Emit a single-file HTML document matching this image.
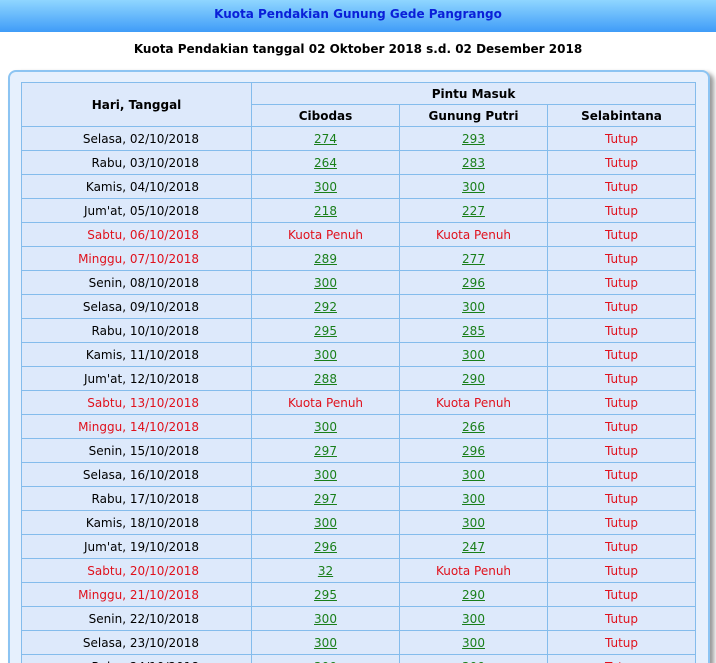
<!DOCTYPE html>
<html style="overflow:hidden;height:663px"><head><meta charset="utf-8"><style>
body{margin:0;background:#fff;font-family:"DejaVu Sans","Liberation Sans",sans-serif;font-size:12px;width:716px;height:663px;overflow:hidden;position:relative}
.top{height:32px;background:linear-gradient(#8fd6ff,#3f9cf8);text-align:center;color:#0a1fd8;font-weight:bold;font-size:12px;line-height:28px}
h2{margin:0;font-size:12px;text-align:center;position:absolute;top:42px;left:0;width:716px;color:#000}
.box{position:absolute;left:8px;top:70px;width:698px;height:620px;border:2px solid #8cc4f2;border-radius:8px;background:#e6f0fd;box-shadow:4px 3px 5px #999}
table{position:absolute;left:11px;top:10px;border-collapse:collapse;background:#dde9fb}
td,th{border:1px solid #84bcec;height:23px;padding:0;text-align:center;color:#000}
th{font-weight:bold;height:21px}
td.d{text-align:right;padding-right:52px}
.r{color:#e0111c}
a{color:#1a7f1a;text-decoration:underline}
</style></head><body>
<div class="top">Kuota Pendakian Gunung Gede Pangrango</div>
<h2>Kuota Pendakian tanggal 02 Oktober 2018 s.d. 02 Desember 2018</h2>
<div class="box"><table>
<colgroup><col style="width:230px"><col style="width:148px"><col style="width:148px"><col style="width:148px"></colgroup>
<tr><th rowspan="2">Hari, Tanggal</th><th colspan="3">Pintu Masuk</th></tr>
<tr><th>Cibodas</th><th>Gunung Putri</th><th>Selabintana</th></tr>
<tr><td class="d">Selasa, 02/10/2018</td><td><a>274</a></td><td><a>293</a></td><td class="r">Tutup</td></tr>
<tr><td class="d">Rabu, 03/10/2018</td><td><a>264</a></td><td><a>283</a></td><td class="r">Tutup</td></tr>
<tr><td class="d">Kamis, 04/10/2018</td><td><a>300</a></td><td><a>300</a></td><td class="r">Tutup</td></tr>
<tr><td class="d">Jum'at, 05/10/2018</td><td><a>218</a></td><td><a>227</a></td><td class="r">Tutup</td></tr>
<tr><td class="d r">Sabtu, 06/10/2018</td><td class="r">Kuota Penuh</td><td class="r">Kuota Penuh</td><td class="r">Tutup</td></tr>
<tr><td class="d r">Minggu, 07/10/2018</td><td><a>289</a></td><td><a>277</a></td><td class="r">Tutup</td></tr>
<tr><td class="d">Senin, 08/10/2018</td><td><a>300</a></td><td><a>296</a></td><td class="r">Tutup</td></tr>
<tr><td class="d">Selasa, 09/10/2018</td><td><a>292</a></td><td><a>300</a></td><td class="r">Tutup</td></tr>
<tr><td class="d">Rabu, 10/10/2018</td><td><a>295</a></td><td><a>285</a></td><td class="r">Tutup</td></tr>
<tr><td class="d">Kamis, 11/10/2018</td><td><a>300</a></td><td><a>300</a></td><td class="r">Tutup</td></tr>
<tr><td class="d">Jum'at, 12/10/2018</td><td><a>288</a></td><td><a>290</a></td><td class="r">Tutup</td></tr>
<tr><td class="d r">Sabtu, 13/10/2018</td><td class="r">Kuota Penuh</td><td class="r">Kuota Penuh</td><td class="r">Tutup</td></tr>
<tr><td class="d r">Minggu, 14/10/2018</td><td><a>300</a></td><td><a>266</a></td><td class="r">Tutup</td></tr>
<tr><td class="d">Senin, 15/10/2018</td><td><a>297</a></td><td><a>296</a></td><td class="r">Tutup</td></tr>
<tr><td class="d">Selasa, 16/10/2018</td><td><a>300</a></td><td><a>300</a></td><td class="r">Tutup</td></tr>
<tr><td class="d">Rabu, 17/10/2018</td><td><a>297</a></td><td><a>300</a></td><td class="r">Tutup</td></tr>
<tr><td class="d">Kamis, 18/10/2018</td><td><a>300</a></td><td><a>300</a></td><td class="r">Tutup</td></tr>
<tr><td class="d">Jum'at, 19/10/2018</td><td><a>296</a></td><td><a>247</a></td><td class="r">Tutup</td></tr>
<tr><td class="d r">Sabtu, 20/10/2018</td><td><a>32</a></td><td class="r">Kuota Penuh</td><td class="r">Tutup</td></tr>
<tr><td class="d r">Minggu, 21/10/2018</td><td><a>295</a></td><td><a>290</a></td><td class="r">Tutup</td></tr>
<tr><td class="d">Senin, 22/10/2018</td><td><a>300</a></td><td><a>300</a></td><td class="r">Tutup</td></tr>
<tr><td class="d">Selasa, 23/10/2018</td><td><a>300</a></td><td><a>300</a></td><td class="r">Tutup</td></tr>
<tr><td class="d">Rabu, 24/10/2018</td><td><a>300</a></td><td><a>300</a></td><td class="r">Tutup</td></tr>
</table></div>
</body></html>
